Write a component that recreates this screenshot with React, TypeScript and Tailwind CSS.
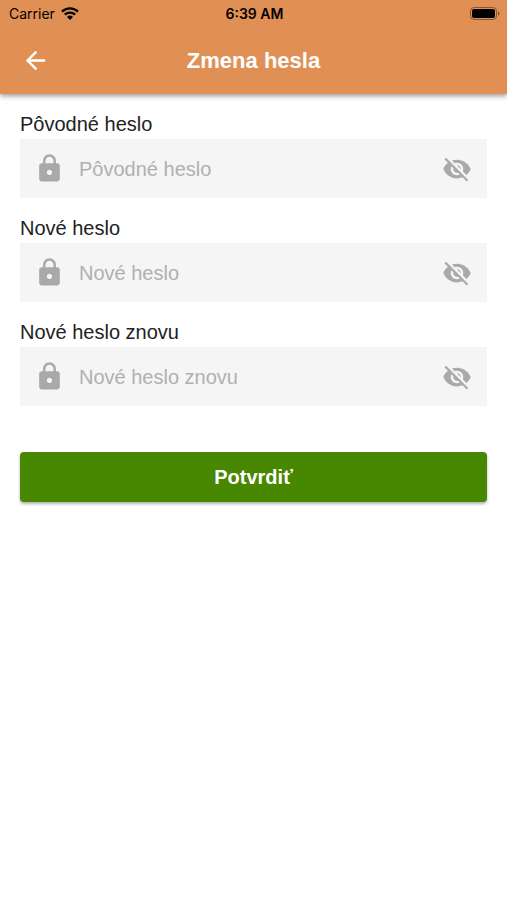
import { MdArrowBack, MdLock, MdVisibilityOff } from "react-icons/md";

const fields = [
  { name: "oldPassword", label: "Pôvodné heslo" },
  { name: "newPassword", label: "Nové heslo" },
  { name: "newPasswordAgain", label: "Nové heslo znovu" },
];

const StatusBar = () => {
  return (
    <div className="flex h-[27px] items-center justify-between pl-[9px] pr-[7px] font-['Inter',sans-serif] text-black">
      <div className="flex w-[160px] items-center gap-[6px]">
        <span className="text-[14px]">Carrier</span>
        <svg width="18" height="13" viewBox="0 0 18 13" fill="none">
          <path d="M1 4.6a11.6 11.6 0 0 1 16 0" stroke="#000" strokeWidth="2.4" />
          <path d="M3.8 7.6a7.6 7.6 0 0 1 10.4 0" stroke="#000" strokeWidth="2.3" />
          <path d="M6 9.9a4.4 4.4 0 0 1 6 0L9 13z" fill="#000" />
        </svg>
      </div>
      <span className="text-[14px] font-semibold">6:39 AM</span>
      <div className="flex w-[160px] justify-end">
        <svg width="30" height="13" viewBox="0 0 30 13" fill="none">
          <rect x=".5" y=".5" width="26" height="12" rx="3.5" stroke="#000" strokeOpacity=".4" />
          <rect x="2" y="2" width="23" height="9" rx="2" fill="#000" />
          <path d="M28 4.5c2 .7 2 3.3 0 4z" fill="#000" fillOpacity=".45" />
        </svg>
      </div>
    </div>
  );
};

const PasswordField = ({ name, label }: { name: string; label: string }) => {
  return (
    <div className="h-[104px]">
      <label htmlFor={name} className="block h-[30px] text-[20px] leading-[30px] font-medium text-[#222]">
        {label}
      </label>
      <div className="flex h-[59px] items-center bg-[#f5f5f5] pl-[14px] pr-[15px]">
        <MdLock className="size-[31px] shrink-0 text-[#a9a9a9]" />
        <input
          id={name}
          type="password"
          placeholder={label}
          className="ml-[14px] min-w-0 flex-1 text-[20px] outline-none placeholder:text-[#b0b0b0]"
        />
        <MdVisibilityOff className="size-[30px] shrink-0 text-[#a9a9a9]" />
      </div>
    </div>
  );
};

const App = () => {
  return (
    <div className="min-h-screen bg-white font-['Liberation_Sans',sans-serif]">
      <header className="h-[94px] bg-[#e19055] shadow-[0_2px_5px_rgba(0,0,0,0.4)]">
        <StatusBar />
        <div className="flex h-[66px] items-center px-[21px]">
          <MdArrowBack className="size-[29px] text-white" />
          <h1 className="flex-1 pr-[29px] text-center text-[22px] font-bold text-white">Zmena hesla</h1>
        </div>
      </header>
      <form className="px-[20px] pt-[15px]">
        {fields.map((field) => (
          <PasswordField key={field.name} name={field.name} label={field.label} />
        ))}
        <button
          type="button"
          className="mt-[31px] h-[50px] w-full rounded-[4px] bg-[#488800] text-[20px] font-bold text-white shadow-[0_2px_3px_rgba(0,0,0,0.3)]"
        >
          Potvrdiť
        </button>
      </form>
    </div>
  );
};

export default App;
